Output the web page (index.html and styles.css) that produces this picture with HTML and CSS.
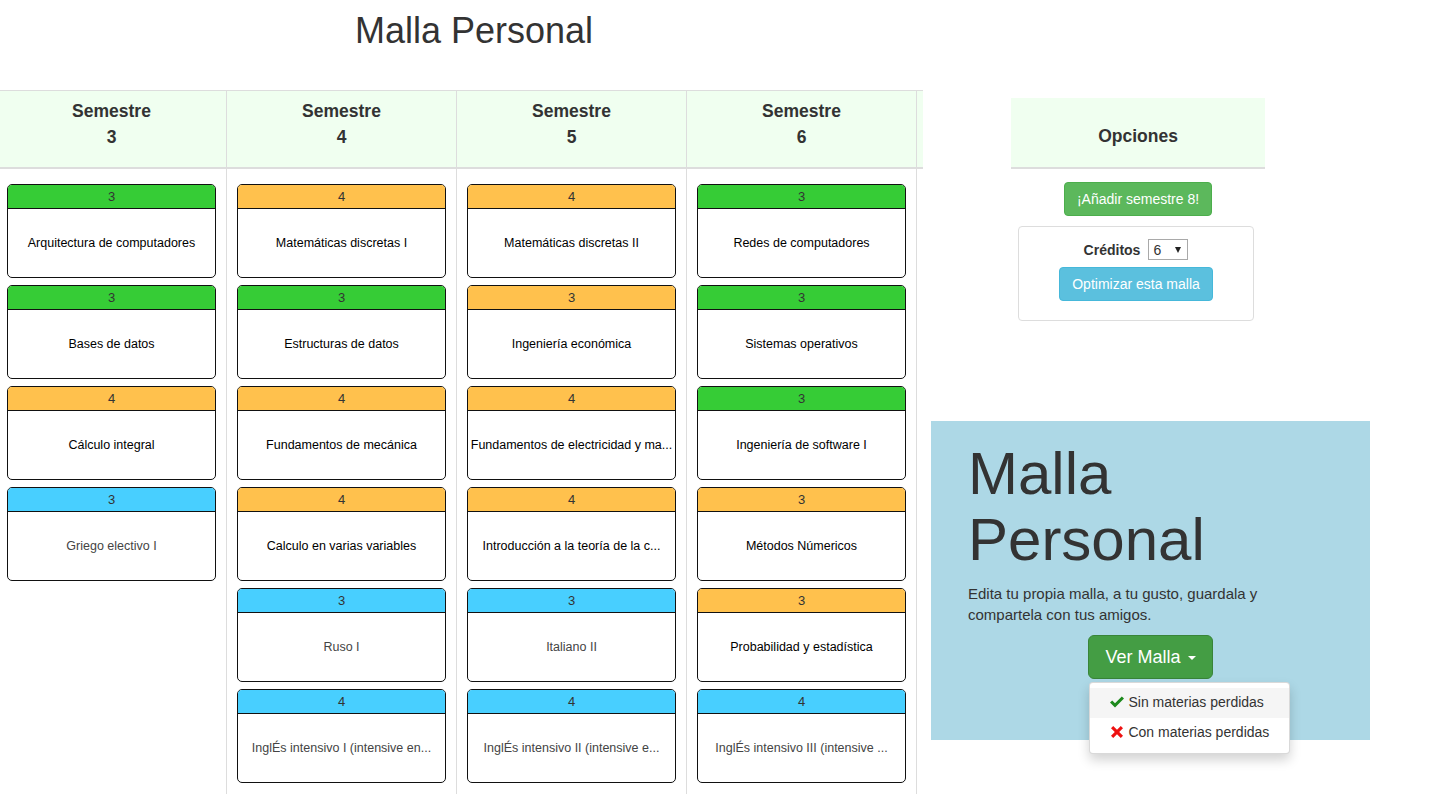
FILE: index.html
```html
<!DOCTYPE html>
<html lang="es">
<head>
<meta charset="utf-8">
<title>Malla Personal</title>
<link rel="stylesheet" href="styles.css">
</head>
<body>
<div class="page">
  <div class="left">
    <h1 class="title">Malla Personal</h1>
    <div class="table-view">
      <div class="strip">
        <div class="sem">
          <div class="sem-head">Semestre<br>3</div>
          <div class="sem-body">
            <div class="card green"><div class="cr">3</div><div class="name">Arquitectura de computadores</div></div>
            <div class="card green"><div class="cr">3</div><div class="name">Bases de datos</div></div>
            <div class="card orange"><div class="cr">4</div><div class="name">Cálculo integral</div></div>
            <div class="card blue"><div class="cr">3</div><div class="name elec">Griego electivo I</div></div>
          </div>
        </div>
        <div class="sem">
          <div class="sem-head">Semestre<br>4</div>
          <div class="sem-body">
            <div class="card orange"><div class="cr">4</div><div class="name">Matemáticas discretas I</div></div>
            <div class="card green"><div class="cr">3</div><div class="name">Estructuras de datos</div></div>
            <div class="card orange"><div class="cr">4</div><div class="name">Fundamentos de mecánica</div></div>
            <div class="card orange"><div class="cr">4</div><div class="name">Calculo en varias variables</div></div>
            <div class="card blue"><div class="cr">3</div><div class="name elec">Ruso I</div></div>
            <div class="card blue"><div class="cr">4</div><div class="name elec">InglÉs intensivo I (intensive en...</div></div>
          </div>
        </div>
        <div class="sem">
          <div class="sem-head">Semestre<br>5</div>
          <div class="sem-body">
            <div class="card orange"><div class="cr">4</div><div class="name">Matemáticas discretas II</div></div>
            <div class="card orange"><div class="cr">3</div><div class="name">Ingeniería económica</div></div>
            <div class="card orange"><div class="cr">4</div><div class="name">Fundamentos de electricidad y ma...</div></div>
            <div class="card orange"><div class="cr">4</div><div class="name">Introducción a la teoría de la c...</div></div>
            <div class="card blue"><div class="cr">3</div><div class="name elec">Italiano II</div></div>
            <div class="card blue"><div class="cr">4</div><div class="name elec">InglÉs intensivo II (intensive e...</div></div>
          </div>
        </div>
        <div class="sem">
          <div class="sem-head">Semestre<br>6</div>
          <div class="sem-body">
            <div class="card green"><div class="cr">3</div><div class="name">Redes de computadores</div></div>
            <div class="card green"><div class="cr">3</div><div class="name">Sistemas operativos</div></div>
            <div class="card green"><div class="cr">3</div><div class="name">Ingeniería de software I</div></div>
            <div class="card orange"><div class="cr">3</div><div class="name">Métodos Númericos</div></div>
            <div class="card orange"><div class="cr">3</div><div class="name">Probabilidad y estadística</div></div>
            <div class="card blue"><div class="cr">4</div><div class="name elec">InglÉs intensivo III (intensive ...</div></div>
          </div>
        </div>
        <div class="sem">
          <div class="sem-head">&nbsp;<br>&nbsp;</div>
          <div class="sem-body"></div>
        </div>
      </div>
    </div>
  </div>

  <div class="right">
    <div class="options">
      <div class="opt-head">Opciones</div>
      <div class="btn btn-success add">¡Añadir semestre 8!</div>
      <div class="opt-box">
        <div class="cred-row">
          <span>Créditos</span>
          <span class="select"><span>6</span><span class="arrow"></span></span>
        </div>
        <div class="btn btn-info optimize">Optimizar esta malla</div>
      </div>
    </div>

    <div class="jumbo">
      <h1 class="jumbo-title">Malla Personal</h1>
      <p class="jumbo-text">Edita tu propia malla, a tu gusto, guardala y compartela con tus amigos.</p>
      <div class="dd">
        <div class="dd-wrap">
          <div class="btn btn-lg">Ver Malla <span class="caret"></span></div>
          <div class="menu">
            <div class="item active">
              <svg class="ico" viewBox="0 0 14 14" width="14" height="14"><polygon points="0,7.6 2.2,5.4 5,8.2 11.8,1.4 14,3.6 5,12.6" fill="#1d8a1d"/></svg>
              <span>Sin materias perdidas</span>
            </div>
            <div class="item">
              <svg class="ico" viewBox="0 0 14 14" width="14" height="14"><polygon points="1,3.2 3.2,1 7,4.8 10.8,1 13,3.2 9.2,7 13,10.8 10.8,13 7,9.2 3.2,13 1,10.8 4.8,7" fill="#ee1111"/></svg>
              <span>Con materias perdidas</span>
            </div>
          </div>
        </div>
      </div>
    </div>
  </div>
</div>
</body>
</html>
```

FILE: styles.css
```css
* {
  box-sizing: border-box;
}

html, body {
  margin: 0;
  overflow: hidden;
}

body {
  font-family: "Liberation Sans", Arial, Helvetica, sans-serif;
  color: #333;
  background: #fff;
}

.page {
  display: flex;
  align-items: flex-start;
}

.left {
  width: 923px;
  flex: none;
}

.title {
  margin: 0;
  height: 90px;
  padding: 11px 0 0 25px;
  text-align: center;
  font-size: 36px;
  font-weight: 400;
  line-height: 40px;
  color: #333;
}

.table-view {
  overflow: hidden;
  border-top: 1px solid #ddd;
}

.strip {
  display: flex;
  width: max-content;
  margin-left: -4px;
}

.sem {
  width: 230px;
  flex: none;
  display: flex;
  flex-direction: column;
  border-left: 1px solid #ddd;
}

.sem-head {
  background: #f0fff0;
  text-align: center;
  font-weight: bold;
  font-size: 17.5px;
  line-height: 25.7px;
  padding: 8px 0 16.6px;
  border-bottom: 2px solid #ddd;
  white-space: nowrap;
}

.sem-body {
  display: flex;
  flex-direction: column;
  gap: 7px;
  padding: 15px 10px 30px;
  min-height: 640px;
}

.card {
  border: 1px solid #111;
  border-radius: 5px;
  overflow: hidden;
  background: #fff;
}

.cr {
  height: 24px;
  line-height: 23px;
  border-bottom: 1px solid #111;
  text-align: center;
  font-size: 13px;
  color: #333;
}

.green .cr { background: #36cc36; }
.orange .cr { background: #ffc14d; }
.blue .cr { background: #48cfff; }

.name {
  height: 68px;
  display: flex;
  align-items: center;
  justify-content: center;
  padding: 0 2px;
  font-size: 12.5px;
  color: #000;
  white-space: nowrap;
  overflow: hidden;
}

.name.elec {
  color: #444;
}

.right {
  flex: 1;
  min-width: 0;
}

.options {
  width: 254px;
  margin: 98px 0 0 88px;
  text-align: center;
}

.opt-head {
  background: #f0fff0;
  border-bottom: 2px solid #ddd;
  font-weight: bold;
  font-size: 17.5px;
  line-height: 25.7px;
  padding: 26px 0 17px;
}

.btn {
  display: inline-block;
  padding: 6px 12px;
  font-size: 14px;
  line-height: 20px;
  border: 1px solid transparent;
  border-radius: 4px;
  color: #fff;
  white-space: nowrap;
}

.btn-success {
  background: #5cb85c;
  border-color: #4cae4c;
}

.btn-info {
  background: #5bc0de;
  border-color: #46b8da;
}

.add {
  margin-top: 13px;
}

.opt-box {
  margin: 10px 11px 0 7px;
  border: 1px solid #ddd;
  border-radius: 4px;
  padding: 12px 0 19px;
}

.cred-row {
  display: flex;
  justify-content: center;
  align-items: center;
  gap: 8px;
  height: 22px;
  font-weight: bold;
  font-size: 14px;
  color: #333;
}

.select {
  width: 40px;
  height: 21px;
  border: 1px solid #a9a9a9;
  display: flex;
  align-items: center;
  justify-content: space-between;
  padding: 0 6px 0 4px;
  font-weight: normal;
  font-size: 14px;
  color: #333;
  background: #fff;
}

.arrow {
  width: 0;
  height: 0;
  border-top: 6px solid #222;
  border-left: 3.5px solid transparent;
  border-right: 3.5px solid transparent;
}

.optimize {
  margin-top: 6px;
}

.jumbo {
  width: 439px;
  margin: 100px 0 0 8px;
  background: #add8e6;
  padding: 20px 37px 61px;
}

.jumbo-title {
  margin: 0 0 10px;
  font-size: 60px;
  line-height: 1.1;
  font-weight: 400;
  color: #333;
}

.jumbo-text {
  margin: 0 0 10px;
  max-width: 340px;
  font-size: 15px;
  line-height: 21px;
  color: #333;
}

.dd {
  text-align: center;
}

.dd-wrap {
  display: inline-block;
  position: relative;
}

.btn-lg {
  padding: 10px 16px;
  font-size: 18px;
  line-height: 22px;
  border-radius: 6px;
  background: #449d44;
  border-color: #398439;
}

.caret {
  display: inline-block;
  width: 0;
  height: 0;
  margin-left: 2px;
  vertical-align: middle;
  border-top: 4px solid #fff;
  border-left: 4px solid transparent;
  border-right: 4px solid transparent;
}

.menu {
  position: absolute;
  top: 100%;
  left: 1px;
  margin-top: 3px;
  min-width: 160px;
  padding: 5px 0;
  background: #fff;
  border: 1px solid rgba(0, 0, 0, 0.15);
  border-radius: 4px;
  box-shadow: 0 6px 12px rgba(0, 0, 0, 0.175);
  text-align: left;
  z-index: 5;
  white-space: nowrap;
}

.item {
  display: flex;
  align-items: center;
  gap: 4px;
  padding: 4px 20px 6px;
  font-size: 14px;
  line-height: 20px;
  color: #333;
}

.item.active {
  background: #f5f5f5;
}

.ico {
  flex: none;
}
```
